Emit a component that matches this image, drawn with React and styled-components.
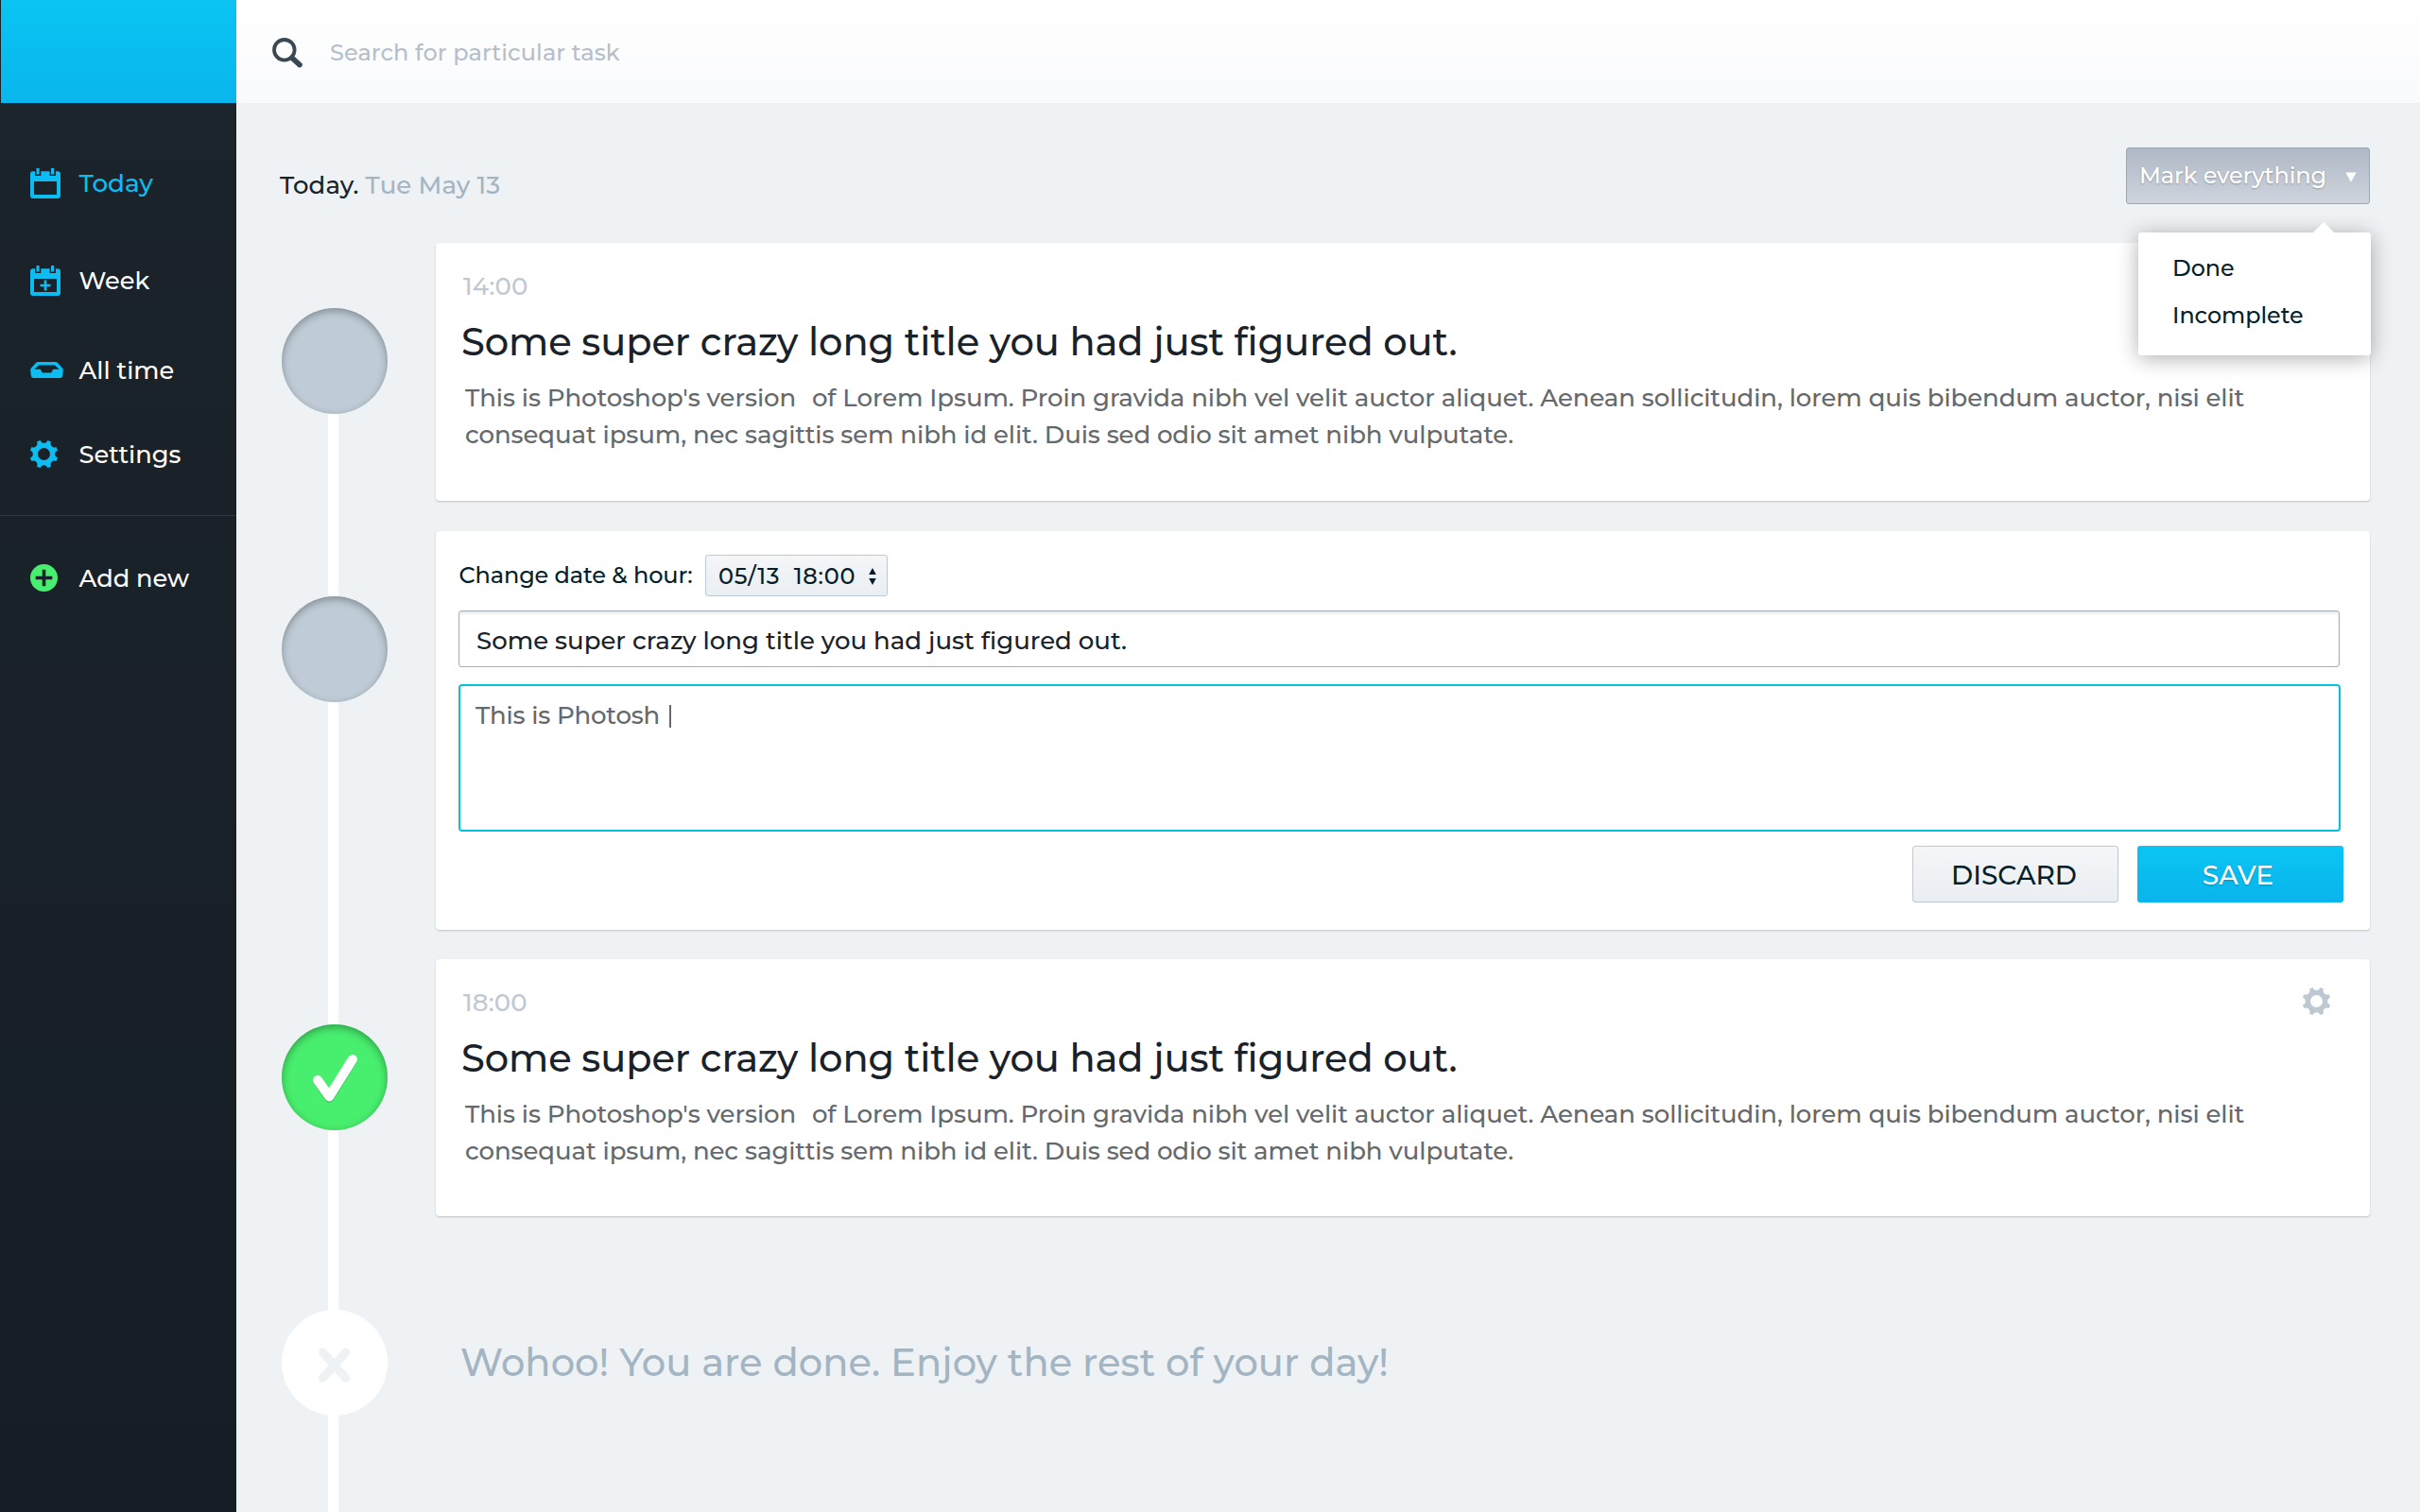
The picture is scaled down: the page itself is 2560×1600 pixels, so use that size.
import React from "react";
import styled, { createGlobalStyle, css } from "styled-components";

const GlobalStyle = createGlobalStyle`
  * { box-sizing: border-box; }
  body {
    margin: 0;
    background: #eef2f5;
    font-family: Montserrat, Inter, "Liberation Sans", sans-serif;
    font-weight: 500;
    color: #1a2229;
  }
  button { font: inherit; margin: 0; padding: 0; }
  svg { display: block; flex: none; }
`;

const Shell = styled.div`
  display: flex;
  width: 2560px;
  height: 1600px;
  overflow: hidden;
`;

/* Sidebar */

const Sidebar = styled.aside`
  flex: none;
  width: 250px;
  background: linear-gradient(#1c242b, #161d24);
`;

const Logo = styled.div`
  height: 109px;
  margin-left: 1px;
  background: linear-gradient(#0ac4f3, #09b6ed);
`;

const Nav = styled.nav`
  display: flex;
  flex-direction: column;
  padding-top: 34px;
`;

const NavItem = styled.a`
  display: flex;
  align-items: center;
  height: ${(p) => p.$height}px;
  padding-left: 32px;
  font-size: ${(p) => (p.$active ? 26.2 : 25.7)}px;
  line-height: 40px;
  color: ${(p) => (p.$active ? "#0bbdf0" : "#ffffff")};
`;

const NavIcon = styled.span`
  width: 51.5px;
  color: ${(p) => p.$color || "#0bbdf0"};
`;

const NavDivider = styled.hr`
  width: 100%;
  height: 1px;
  margin: 19px 0 0;
  border: 0;
  background: #2d3843;
`;

/* Header */

const Main = styled.main`
  flex: 1;
  display: flex;
  flex-direction: column;
`;

const SearchBar = styled.header`
  display: flex;
  align-items: center;
  flex: none;
  height: 109px;
  padding: 2px 0 0 38px;
  gap: 28px;
  background: linear-gradient(#ffffff, #f9fafc);
`;

const SearchHint = styled.span`
  font-size: 24px;
  line-height: 40px;
  letter-spacing: 0.08px;
  color: #b5bfcb;
`;

const DayHeader = styled.section`
  display: flex;
  justify-content: space-between;
  flex: none;
  height: 148px;
  padding: 47px 53px 0 46px;
`;

const DayTitle = styled.h1`
  margin: 20px 0 0;
  font-size: 26px;
  font-weight: 500;
  line-height: 40px;
  height: 40px;
  letter-spacing: 0.12px;
`;

const DayDate = styled.span`
  color: #a3b4c2;
`;

const MarkControl = styled.div`
  position: relative;
  height: 60px;
`;

const MarkButton = styled.button`
  display: flex;
  align-items: center;
  justify-content: space-between;
  width: 258px;
  height: 60px;
  padding: 0 13px 2px 13px;
  border: 1px solid #9aa8b4;
  border-radius: 3px;
  background: linear-gradient(#aeb8c4, #cfd5de);
  font-size: 24px;
  letter-spacing: -0.1px;
  color: #ffffff;
  text-shadow: 0 1px 2px rgba(0, 0, 0, 0.25);

  svg { margin-top: 4px; }
`;

const Menu = styled.ul`
  position: absolute;
  top: 90px;
  right: -1px;
  z-index: 2;
  width: 246px;
  height: 130px;
  margin: 0;
  padding: 13px 0 0 36px;
  list-style: none;
  border-radius: 3px;
  background: #ffffff;
  box-shadow: 0 3px 22px rgba(0, 0, 0, 0.32);

  &::before {
    content: "";
    position: absolute;
    top: -11px;
    right: 39px;
    border: solid transparent;
    border-width: 0 11px 11px;
    border-bottom-color: #ffffff;
  }
`;

const MenuItem = styled.li`
  font-size: 23.8px;
  line-height: 50px;
  color: #041e2b;
`;

/* Timeline */

const Timeline = styled.div`
  display: flex;
  flex-direction: column;
`;

const Entry = styled.div`
  display: flex;
  height: ${(p) => p.$height}px;
`;

const Track = styled.div`
  flex: none;
  display: flex;
  flex-direction: column;
  width: 211px;
`;

const Segment = styled.span`
  width: 11px;
  margin-left: 97px;
  background: ${(p) => (p.$hidden ? "transparent" : "#ffffff")};
  ${(p) => (p.$lead ? css`flex: none; height: 69px;` : css`flex: 1;`)}
`;

const nodeTones = {
  open: css`
    background: #bfccd7;
    box-shadow: inset 0 3px 8px rgba(0, 0, 0, 0.32);
  `,
  done: css`
    background: #48ee6e;
    box-shadow: inset 0 3px 8px rgba(0, 0, 0, 0.34);
  `,
  end: css`
    background: #ffffff;
  `,
};

const Node = styled.span`
  flex: none;
  display: flex;
  align-items: center;
  justify-content: center;
  width: 112px;
  height: 112px;
  margin-left: 48px;
  border-radius: 50%;
  ${(p) => nodeTones[p.$tone]}
`;

const Card = styled.article`
  width: 2046px;
  height: ${(p) => p.$height}px;
  border-radius: 4px;
  background: #ffffff;
  box-shadow: 0 1px 2px rgba(0, 0, 0, 0.2);
`;

const TaskBody = styled.div`
  padding: 26px 0 0 27px;
`;

const TaskTop = styled.div`
  display: flex;
  justify-content: space-between;
  align-items: flex-start;
  height: 40px;
  padding: 0 42px 0 2px;
`;

const TaskTime = styled.span`
  font-size: 26px;
  line-height: 40px;
  letter-spacing: 0.15px;
  color: #c0c9d3;
`;

const GearSlot = styled.span`
  margin-top: 4px;
  color: #bfc8d2;
`;

const TaskTitle = styled.h2`
  margin: 9px 0 0;
  font-size: 40px;
  font-weight: 500;
  line-height: 60px;
  letter-spacing: -0.09px;
`;

const TaskText = styled.p`
  margin: 10px 0 0;
  padding-left: 4px;
  font-size: 26px;
  line-height: 39px;
  letter-spacing: -0.09px;
  color: #65696c;
`;

const WideGap = styled.span`
  white-space: pre;
  letter-spacing: 1.4px;
`;

const Form = styled.div`
  display: flex;
  flex-direction: column;
  padding: 25px 28px 0 24px;
`;

const DateRow = styled.div`
  display: flex;
  align-items: center;
  height: 44px;
  gap: 14px;
  font-size: 24px;
  color: #041e2b;
`;

const DateLabel = styled.label`
  width: 247px;
  padding-left: 0.5px;
  letter-spacing: -0.12px;
  line-height: 40px;
  white-space: nowrap;
`;

const DateSelect = styled.span`
  display: flex;
  align-items: center;
  justify-content: space-between;
  width: 193px;
  height: 44px;
  padding: 1px 11px 0 13px;
  border: 1px solid #bccad6;
  border-radius: 3px;
  background: linear-gradient(#f4f6f8, #eaeef2);
  letter-spacing: 0.74px;
  white-space: pre;
`;

const TitleField = styled.div`
  width: 1990px;
  height: 60px;
  margin-top: 15px;
  padding: 3px 0 0 18px;
  border: 1px solid #a3afbb;
  border-radius: 3px;
  box-shadow: inset 0 2px 3px rgba(0, 0, 0, 0.1);
  font-size: 26px;
  line-height: 57px;
`;

const TextField = styled.div`
  display: flex;
  width: 1991px;
  height: 156px;
  margin-top: 18px;
  padding: 11px 0 0 16px;
  border: 2px solid #05c3e0;
  border-radius: 4px;
  font-size: 26px;
  line-height: 40px;
  letter-spacing: -0.2px;
  color: #65696c;
`;

const Caret = styled.i`
  width: 2px;
  height: 24px;
  margin: 9px 0 0 10px;
  background: #65696c;
`;

const Actions = styled.div`
  display: flex;
  justify-content: flex-end;
  gap: 20px;
  margin-top: 15px;
`;

const ActionButton = styled.button`
  width: 218px;
  height: 60px;
  padding-top: 1px;
  border-radius: 3px;
  font-size: 28px;
  letter-spacing: 0.05px;
  ${(p) =>
    p.$primary
      ? css`
          border: 0;
          background: linear-gradient(#0bc5f4, #09b4ec);
          color: #ffffff;
          padding-right: 5px;
          text-shadow: 0 1px 2px rgba(0, 0, 0, 0.25);
        `
      : css`
          border: 1px solid #bccad6;
          background: linear-gradient(#f4f6f8, #eaeef2);
          color: #041e2b;
          padding-right: 3px;
        `}
`;

const Finished = styled.p`
  margin: 69px 0 0;
  padding-left: 26px;
  font-size: 40px;
  line-height: 111px;
  letter-spacing: 0.06px;
  color: #a3b4c2;
`;

/* Icons */

const gearPath = (() => {
  const pt = (r, deg) => {
    const a = (deg * Math.PI) / 180;
    return `${(r * Math.sin(a)).toFixed(2)} ${(-r * Math.cos(a)).toFixed(2)}`;
  };
  let d = `M${pt(15, -30.5)}`;
  for (let i = 0; i < 8; i++) {
    const c = i * 45;
    d += `A15 15 0 0 1 ${pt(15, c - 14.5)}A3.9 3.9 0 0 0 ${pt(15, c + 14.5)}`;
  }
  return `${d}ZM0 -6.5A6.5 6.5 0 1 0 0 6.5A6.5 6.5 0 1 0 0 -6.5Z`;
})();

const Gear = () => (
  <svg width="29" height="29" viewBox="-14.5 -14.5 29 29" fill="currentColor" fillRule="evenodd">
    <path d={gearPath} />
  </svg>
);

const Calendar = ({ plus }) => (
  <svg width="32" height="32" viewBox="0 0 32 32" fill="currentColor">
    <path
      fillRule="evenodd"
      d="M3 3.2H5V8H11.3V3.2H20.6V8H26.9V3.2H29A3 3 0 0 1 32 6.2V29A3 3 0 0 1 29 32H3A3 3 0 0 1 0 29V6.2A3 3 0 0 1 3 3.2ZM4 14V28H28V14Z"
    />
    <path d="M6.5 0H9.6V6.5H6.5ZM22 0H25.1V6.5H22Z" />
    {plus && <path d="M14.7 15.5H17.3V19.7H21.5V22.3H17.3V26.5H14.7V22.3H10.5V19.7H14.7Z" />}
  </svg>
);

const Inbox = () => (
  <svg width="35" height="17" viewBox="0 0 35 17" fill="currentColor">
    <path
      fillRule="evenodd"
      d="M8 0H27Q28 0 28.8 .7L34 6.6Q35 7.6 34.8 9L34.2 14.5Q33.9 17 31.5 17H3.5Q1.1 17 .8 14.5L.2 9Q0 7.6 1 6.6L6.2 .7Q7 0 8 0ZM9 3.6L4.3 7.7H10.3Q11.3 7.9 11.7 9.4Q12.1 11.5 13.3 11.6H21.7Q22.9 11.5 23.3 9.4Q23.7 7.9 24.7 7.7H30.7L26 3.6Z"
    />
  </svg>
);

const AddCircle = () => (
  <svg width="29" height="29" viewBox="0 0 29 29" fill="currentColor">
    <path
      fillRule="evenodd"
      d="M14.5 0A14.5 14.5 0 1 1 14.5 29A14.5 14.5 0 1 1 14.5 0ZM12.7 5.7V12.7H5.7V16.2H12.7V23.2H16.3V16.2H23.3V12.7H16.3V5.7Z"
    />
  </svg>
);

const SearchIcon = () => (
  <svg width="33" height="32" viewBox="0 0 33 32" fill="none" stroke="#3b4853">
    <circle cx="12.8" cy="12.8" r="10.8" strokeWidth="3.8" />
    <path d="M20.8 21.2L29 28.6" strokeWidth="5.6" strokeLinecap="round" />
  </svg>
);

const Check = () => (
  <svg width="60" height="64" viewBox="0 0 60 64" fill="none" strokeLinecap="round" strokeLinejoin="round" strokeWidth="10">
    <path d="M12 35.9L24.3 53.6L49 14" stroke="rgba(0,0,0,.2)" />
    <path d="M12 35L24.3 52.4L49 13" stroke="#fff" />
  </svg>
);

const Cross = () => (
  <svg width="36" height="41" viewBox="0 0 36 41" fill="none" stroke="#eef2f5" strokeWidth="9" strokeLinecap="round">
    <path d="M5.5 9L29.8 36.2M29.8 9L5.5 36.2" />
  </svg>
);

const DownArrow = () => (
  <svg width="12" height="11" viewBox="0 0 12 11" fill="#fff">
    <path d="M.3 .5H11.7L6 10.8Z" />
  </svg>
);

const Sorter = () => (
  <svg width="8" height="18" viewBox="0 0 8 18" fill="#041e2b">
    <path d="M4 0L7.8 7H.2ZM4 18L.2 11H7.8Z" />
  </svg>
);

/* Content */

const title = "Some super crazy long title you had just figured out.";

const Step = ({ height, tone, first, icon, children }) => (
  <Entry $height={height}>
    <Track>
      <Segment $lead $hidden={first} />
      <Node $tone={tone}>{icon}</Node>
      <Segment />
    </Track>
    {children}
  </Entry>
);

const Task = ({ time, height, gear }) => (
  <Card $height={height}>
    <TaskBody>
      <TaskTop>
        <TaskTime>{time}</TaskTime>
        {gear && <GearSlot><Gear /></GearSlot>}
      </TaskTop>
      <TaskTitle>{title}</TaskTitle>
      <TaskText>
        This is Photoshop's version<WideGap>{"  "}</WideGap>of Lorem Ipsum. Proin gravida nibh vel velit auctor aliquet. Aenean sollicitudin, lorem quis bibendum auctor, nisi elit
        <br />
        consequat ipsum, nec sagittis sem nibh id elit. Duis sed odio sit amet nibh vulputate.
      </TaskText>
    </TaskBody>
  </Card>
);

export default function App() {
  return (
    <Shell>
      <GlobalStyle />
      <Sidebar>
        <Logo />
        <Nav>
          <NavItem $height={102} $active><NavIcon><Calendar /></NavIcon>Today</NavItem>
          <NavItem $height={103}><NavIcon><Calendar plus /></NavIcon>Week</NavItem>
          <NavItem $height={87}><NavIcon><Inbox /></NavIcon>All time</NavItem>
          <NavItem $height={91}><NavIcon><Gear /></NavIcon>Settings</NavItem>
          <NavDivider />
          <NavItem $height={131}><NavIcon $color="#48ee6e"><AddCircle /></NavIcon>Add new</NavItem>
        </Nav>
      </Sidebar>
      <Main>
        <SearchBar>
          <SearchIcon />
          <SearchHint>Search for particular task</SearchHint>
        </SearchBar>
        <DayHeader>
          <DayTitle>Today. <DayDate>Tue May 13</DayDate></DayTitle>
          <MarkControl>
            <MarkButton>Mark everything<DownArrow /></MarkButton>
            <Menu>
              <MenuItem>Done</MenuItem>
              <MenuItem>Incomplete</MenuItem>
            </Menu>
          </MarkControl>
        </DayHeader>
        <Timeline>
          <Step height={305} tone="open" first>
            <Task time="14:00" height={273} />
          </Step>
          <Step height={453} tone="open">
            <Card $height={422}>
              <Form>
                <DateRow>
                  <DateLabel>Change date &amp; hour:</DateLabel>
                  <DateSelect>{"05/13  18:00"}<Sorter /></DateSelect>
                </DateRow>
                <TitleField>{title}</TitleField>
                <TextField>This is Photosh<Caret /></TextField>
                <Actions>
                  <ActionButton>DISCARD</ActionButton>
                  <ActionButton $primary>SAVE</ActionButton>
                </Actions>
              </Form>
            </Card>
          </Step>
          <Step height={302} tone="done" icon={<Check />}>
            <Task time="18:00" height={272} gear />
          </Step>
          <Step height={283} tone="end" icon={<Cross />}>
            <Finished>Wohoo! You are done. Enjoy the rest of your day!</Finished>
          </Step>
        </Timeline>
      </Main>
    </Shell>
  );
}
